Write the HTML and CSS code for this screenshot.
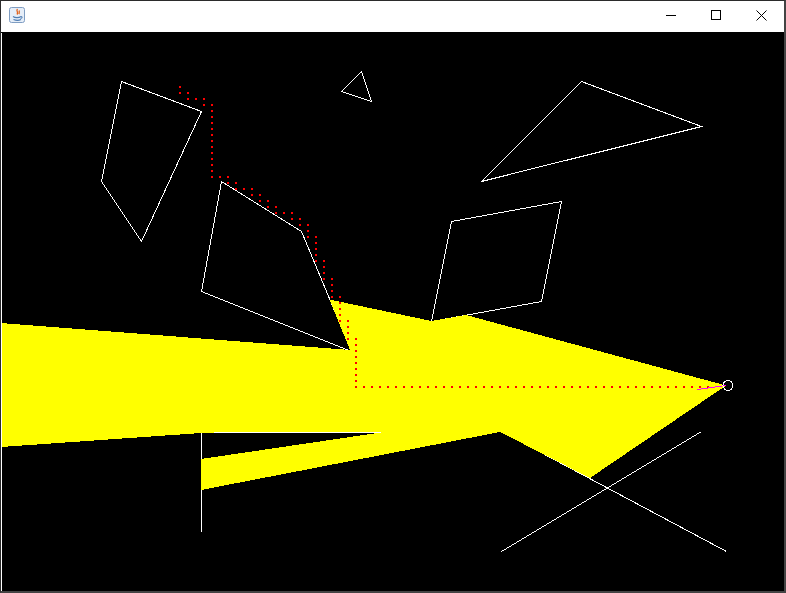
FILE: index.html
```html
<!DOCTYPE html>
<html>
<head>
<meta charset="utf-8">
<link rel="stylesheet" href="styles.css">
</head>
<body>
<div class="window">
  <div class="titlebar">
    <svg class="app-icon" width="16" height="16" viewBox="0 0 16 16">
      <rect x="0.5" y="0.5" width="15" height="15" rx="2" fill="#e6eef8" stroke="#7f9dc2"/>
      <path d="M8.5 2 C6.5 4 10 5 8 7.5 M10.5 3.5 C9.5 5 11 5.5 9.8 7" stroke="#e2621b" stroke-width="1.3" fill="none"/>
      <path d="M4 9.5 C6 11 10 11 12 9.5 M12 9.5 C13.5 9.5 13.5 11.5 11.5 11.5 M4.5 12.5 C7 13.5 10 13.5 12 12.5" stroke="#4f7db3" stroke-width="1.1" fill="none"/>
    </svg>
    <div class="controls">
      <div class="ctl ctl-min"><svg width="10" height="10" viewBox="0 0 10 10"><path d="M0 5.5 H10" stroke="#000"/></svg></div>
      <div class="ctl ctl-max"><svg width="10" height="10" viewBox="0 0 10 10"><rect x="0.5" y="0.5" width="9" height="9" fill="none" stroke="#000"/></svg></div>
      <div class="ctl ctl-close"><svg width="11" height="11" viewBox="0 0 11 11"><path d="M0.5 0.5 L10.5 10.5 M10.5 0.5 L0.5 10.5" stroke="#000" stroke-width="1"/></svg></div>
    </div>
  </div>
  <div class="canvas">
    <svg class="scene" width="783" height="559" viewBox="1 32 783 559" shape-rendering="crispEdges">
      <g class="walls" transform="translate(0.5 0.5)">
        <polygon points="121,81 201,111 141,241 101,181"/>
        <polygon points="361,71 341,91 371,101"/>
        <polygon points="581,81 701,126 481,181"/>
        <polygon points="221,181 301,231 351,351 201,291"/>
        <polygon points="451,221 561,201 541,301 431,321"/>
        <polyline points="385,432 201,432 201,531"/>
        <line x1="501" y1="551" x2="701" y2="431"/>
        <line x1="501" y1="431" x2="726" y2="551"/>
      </g>
      <polygon class="light" points="726,385.5 466,315 431.5,321 329.5,299.5 350,350 1,323 1,447 201,433 227,432 384,432 201,459 201,490 500,432 590,478"/>
      <g class="walls" transform="translate(0.5 0.5)">
        <line x1="1" y1="32" x2="1" y2="591"/>
      </g>
      <path class="path-v" d="M180 86 V94 M188 92 V100 M196 98 V100 M204 98 V106 M212 104 V178 M220 176 V178 M228 176 V184 M236 182 V190 M244 188 V190 M252 188 V196 M260 194 V202 M268 200 V208 M276 206 V214 M284 212 V214 M292 212 V220 M300 218 V226 M308 224 V238 M316 236 V262 M324 260 V280 M332 278 V298 M340 296 V322 M348 320 V340 M356 338 V388"/>
      <path class="path-h" d="M363 387 H709"/>
      <path class="facing" d="M697 389.5 L726 385.5"/>
      <circle class="viewer" cx="728" cy="385.5" r="5"/>
    </svg>
  </div>
</div>
</body>
</html>
```
FILE: styles.css
```css
* { box-sizing: border-box; }
html, body { margin: 0; padding: 0; background: #ffffff; }
body { font-family: "Liberation Sans", Arial, sans-serif; }

.window {
  width: 786px;
  height: 593px;
  border-style: solid;
  border-width: 1px 2px 2px 1px;
  border-color: #2b2b2b #444444 #444444 #2b2b2b;
  display: flex;
  flex-direction: column;
  overflow: hidden;
}

.titlebar {
  height: 31px;
  flex: 0 0 31px;
  background: #ffffff;
  display: flex;
  align-items: flex-start;
}

.app-icon {
  display: block;
  margin: 6px 0 0 8px;
}

.controls {
  margin-left: auto;
  display: flex;
}

.ctl {
  width: 46px;
  height: 31px;
  display: flex;
  justify-content: center;
  align-items: flex-start;
  padding-top: 9px;
}
.ctl svg { display: block; shape-rendering: crispEdges; }
.ctl-min { padding-left: 3px; }
.ctl-max { padding-left: 1px; }
.ctl-close svg { shape-rendering: auto; }

.canvas {
  flex: 1 1 auto;
  background: #000000;
}

.scene { display: block; }

.walls polygon,
.walls polyline,
.walls line {
  fill: none;
  stroke: #ffffff;
  stroke-width: 1;
}

.light { fill: #ffff00; stroke: none; }

.path-v {
  fill: none;
  stroke: #ff0000;
  stroke-width: 2;
  stroke-dasharray: 2 4;
}
.path-h {
  fill: none;
  stroke: #ff0000;
  stroke-width: 2;
  stroke-dasharray: 2 6;
}
.facing { fill: none; stroke: #ff00ff; stroke-width: 1; }
.viewer { fill: none; stroke: #ffffff; stroke-width: 1; }
```
